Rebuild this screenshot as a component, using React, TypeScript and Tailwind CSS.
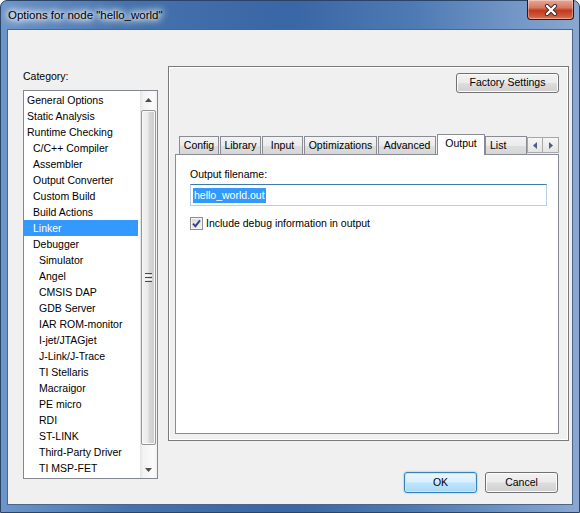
import React from "react";

type Category = { label: string; level: number };

const categories: Category[] = [
  { label: "General Options", level: 0 },
  { label: "Static Analysis", level: 0 },
  { label: "Runtime Checking", level: 0 },
  { label: "C/C++ Compiler", level: 1 },
  { label: "Assembler", level: 1 },
  { label: "Output Converter", level: 1 },
  { label: "Custom Build", level: 1 },
  { label: "Build Actions", level: 1 },
  { label: "Linker", level: 1 },
  { label: "Debugger", level: 1 },
  { label: "Simulator", level: 2 },
  { label: "Angel", level: 2 },
  { label: "CMSIS DAP", level: 2 },
  { label: "GDB Server", level: 2 },
  { label: "IAR ROM-monitor", level: 2 },
  { label: "I-jet/JTAGjet", level: 2 },
  { label: "J-Link/J-Trace", level: 2 },
  { label: "TI Stellaris", level: 2 },
  { label: "Macraigor", level: 2 },
  { label: "PE micro", level: 2 },
  { label: "RDI", level: 2 },
  { label: "ST-LINK", level: 2 },
  { label: "Third-Party Driver", level: 2 },
  { label: "TI MSP-FET", level: 2 },
];

const indent = ["pl-[3px]", "pl-[9px]", "pl-[15px]"];

const tabs = [
  { label: "Config", width: "w-[40px] ml-[4px] justify-center" },
  { label: "Library", width: "w-[41px] ml-px justify-center" },
  { label: "Input", width: "w-[41px] ml-px justify-center" },
  { label: "Optimizations", width: "w-[73px] ml-px justify-center" },
  { label: "Advanced", width: "w-[58px] ml-px justify-center" },
  { label: "Output", width: "w-[48px] ml-px justify-center", active: true },
  { label: "List", width: "w-[42px] justify-start pl-[4px]" },
];

const buttonClass =
  "flex items-center justify-center rounded-[3px] border border-[#707070] bg-[linear-gradient(#f2f2f2,#ebebeb_48%,#dddddd_52%,#cfcfcf)] shadow-[inset_0_0_0_1px_#fcfcfc] text-black";

function ScrollArrow({ down }: { down?: boolean }) {
  return (
    <svg width="7" height="4" viewBox="0 0 7 4">
      {down ? <path d="M0 0h7L3.5 4z" fill="#4d4d4d" /> : <path d="M0 4h7L3.5 0z" fill="#4d4d4d" />}
    </svg>
  );
}

export default function App() {
  return (
    <div className="w-[580px] h-[513px] overflow-hidden font-['Liberation_Sans',Arial,sans-serif] text-[10.5px] text-black">
      <div className="w-[580px] h-[513px] flex flex-col rounded-t-[7px] border border-[#2b4466] bg-[linear-gradient(90deg,#6d95c9_0%,#4673ae_22%,#3966a4_50%,#4f7bb4_72%,#8aa8d1_100%)]">
        {/* title bar */}
        <div className="h-[28px] flex items-start justify-between pl-[7px] pr-[5px]">
          <span className="mt-[7px] text-[11.5px] leading-[14px] text-black [text-shadow:0_0_8px_#ffffff,0_0_8px_#ffffff,0_0_4px_#ffffff,0_0_12px_#ffffff]">
            Options for node "hello_world"
          </span>
          <div className="w-[47px] h-[20px] -mt-px flex items-center justify-center rounded-b-[4px] border border-t-0 border-[#3d1308] bg-[linear-gradient(#e8a795,#d47a63_40%,#c13a1c_55%,#cf5a3c_85%,#e07a58)] shadow-[inset_0_0_0_1px_rgba(255,255,255,0.35)]">
            <svg width="14" height="12" viewBox="0 0 14 12">
              <path d="M3 2l8 8M11 2l-8 8" stroke="#3b2a28" strokeWidth="4.2" strokeLinecap="round" />
              <path d="M3 2l8 8M11 2l-8 8" stroke="#ffffff" strokeWidth="2.4" strokeLinecap="round" />
            </svg>
          </div>
        </div>

        {/* client area */}
        <div className="ml-[6px] w-[566px] h-[476px] border border-[#4d6688] bg-[#f0f0f0] flex items-start">
          {/* category column */}
          <div className="ml-[15px] mt-[39px] flex flex-col">
            <div className="h-[14px] leading-[14px]">Category:</div>
            <div className="mt-[7px] w-[135px] h-[389px] border border-[#828790] bg-white flex">
              <div className="flex-1 pt-px flex flex-col">
                {categories.map((c) =>
                  c.label === "Linker" ? (
                    <div
                      key={c.label}
                      className={`h-[16px] leading-[16px] mr-[2px] bg-[#3399ff] text-white whitespace-nowrap ${indent[c.level]}`}
                    >
                      {c.label}
                    </div>
                  ) : (
                    <div key={c.label} className={`h-[16px] leading-[16px] whitespace-nowrap ${indent[c.level]}`}>
                      {c.label}
                    </div>
                  )
                )}
              </div>
              {/* scrollbar */}
              <div className="w-[17px] h-full flex flex-col bg-[linear-gradient(90deg,#e4e4e4,#f3f3f3_20%,#fbfbfb_80%,#f1f1f1)]">
                <div className="h-[17px] flex items-center justify-center">
                  <ScrollArrow />
                </div>
                <div className="flex-1 px-px">
                  <div className="mt-[2px] h-[335px] rounded-[2px] border border-[#959595] bg-[linear-gradient(90deg,#f4f4f4,#e9e9e9_45%,#d7d7d7_55%,#cccccc)] shadow-[inset_0_0_0_1px_#f8f8f8] flex flex-col items-center justify-center gap-[1px]">
                    <div className="w-[7px] h-px bg-[#4a4a4a]" />
                    <div className="w-[7px] h-px bg-[#fafafa]" />
                    <div className="w-[7px] h-px bg-[#4a4a4a]" />
                    <div className="w-[7px] h-px bg-[#fafafa]" />
                    <div className="w-[7px] h-px bg-[#4a4a4a]" />
                  </div>
                </div>
                <div className="h-[17px] flex items-center justify-center">
                  <ScrollArrow down />
                </div>
              </div>
            </div>
          </div>

          {/* right column */}
          <div className="ml-[10px] mt-[36px] flex flex-col">
            <div className="w-[401px] h-[375px] border border-[#7a7a7a] shadow-[inset_0_0_0_1px_#ffffff] flex flex-col">
              <div className="flex justify-end pr-[9px] pt-[6px]">
                <button className={`${buttonClass} w-[103px] h-[20px]`}>Factory Settings</button>
              </div>

              <div className="ml-[6px] mt-[41px] w-[384px] flex flex-col">
                {/* tab strip */}
                <div className="h-[20px] flex items-end">
                  {tabs.map((t) =>
                    t.active ? (
                      <div
                        key={t.label}
                        className={`${t.width} h-[21px] -mb-px relative z-10 border border-b-0 border-[#898c95] bg-white flex items-center pb-[2px]`}
                      >
                        {t.label}
                      </div>
                    ) : (
                      <div
                        key={t.label}
                        className={`${t.width} h-[18px] border border-b-0 border-[#898c95] bg-[linear-gradient(#f3f3f3,#ebebeb_50%,#dedede_51%,#d6d6d6)] flex items-center`}
                      >
                        {t.label}
                      </div>
                    )
                  )}
                  <div className="ml-auto mb-px flex">
                    <div className="w-[16px] h-[16px] border border-[#a7a7a7] bg-[linear-gradient(#f6f6f6,#e4e4e4)] flex items-center justify-center">
                      <svg width="4" height="7" viewBox="0 0 4 7">
                        <path d="M4 0v7L0 3.5z" fill="#4b5f85" />
                      </svg>
                    </div>
                    <div className="w-[16px] h-[16px] border border-l-0 border-[#a7a7a7] bg-[linear-gradient(#f6f6f6,#e4e4e4)] flex items-center justify-center">
                      <svg width="4" height="7" viewBox="0 0 4 7">
                        <path d="M0 0v7l4-3.5z" fill="#4b5f85" />
                      </svg>
                    </div>
                  </div>
                </div>

                {/* tab panel */}
                <div className="h-[280px] border border-[#898c95] bg-white pl-[14px] pt-[12px] flex flex-col">
                  <div className="h-[14px] leading-[14px]">Output filename:</div>
                  <div className="mt-[3px] w-[357px] h-[22px] border border-[#b5cfe7] border-t-[#3d7bad] bg-white flex items-center pl-[2px]">
                    <span className="h-[15px] leading-[15px] px-px bg-[#3399ff] text-white">hello_world.out</span>
                  </div>
                  <div className="mt-[10px] flex items-center">
                    <div className="w-[13px] h-[13px] border border-[#8e8f8f] bg-[linear-gradient(135deg,#d8d8d8,#f4f4f4)] shadow-[inset_0_0_0_1px_#f4f4f4] flex items-center justify-center">
                      <svg width="9" height="9" viewBox="0 0 9 9">
                        <path d="M1 4.6l2.4 2.6L8 1.3" stroke="#32468f" strokeWidth="1.9" fill="none" />
                      </svg>
                    </div>
                    <span className="ml-[3px] leading-[14px]">Include debug information in output</span>
                  </div>
                </div>
              </div>
            </div>

            {/* dialog buttons */}
            <div className="mt-[31px] flex justify-end gap-[8px] pr-[11px]">
              <button className="w-[73px] h-[21px] flex items-center justify-center rounded-[3px] border border-[#3c7fb1] bg-[linear-gradient(#eaf6fd,#d9f0fc_48%,#bee6fd_52%,#a7d9f5)] shadow-[inset_0_0_0_1px_#c3e9fb,0_0_2px_#5fb7e8] text-black">
                OK
              </button>
              <button className={`${buttonClass} w-[73px] h-[21px]`}>Cancel</button>
            </div>
          </div>
        </div>
      </div>
    </div>
  );
}
